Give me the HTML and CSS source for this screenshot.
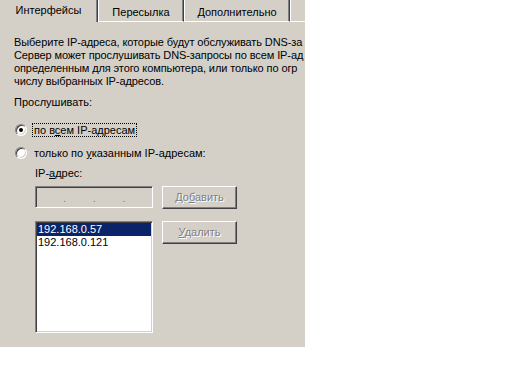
FILE: index.html
```html
<!DOCTYPE html>
<html lang="ru">
<head>
<meta charset="utf-8">
<title>Интерфейсы</title>
<link rel="stylesheet" href="styles.css">
</head>
<body>
<div class="dialog">
  <div class="tabs">
    <div class="tab active">Интерфейсы</div>
    <div class="tab t2">Пересылка</div>
    <div class="tab t3">Дополнительно</div>
    <div class="tab rest"></div>
  </div>
  <div class="panel">
    <p class="desc">Выберите IP-адреса, которые будут обслуживать DNS-за<br>Сервер может прослушивать DNS-запросы по всем IP-ад<br>определенным для этого компьютера, или только по огр<br>числу выбранных IP-адресов.</p>
    <div class="label listen">Прослушивать:</div>
    <div class="radio-row first"><span class="radio checked"></span><span class="rlabel focus">по в<u>с</u>ем IP-адресам</span></div>
    <div class="radio-row second"><span class="radio"></span><span class="rlabel">только по <u>у</u>казанным IP-адресам:</span></div>
    <div class="ip-section">
      <div class="label">IP-<u>а</u>дрес:</div>
      <div class="ctl-row add-row">
        <div class="ipbox"><span>.</span><span>.</span><span>.</span></div>
        <div class="btn">До<u>б</u>авить</div>
      </div>
      <div class="ctl-row list-row">
        <div class="listbox">
          <div class="item sel">192.168.0.57</div>
          <div class="item">192.168.0.121</div>
        </div>
        <div class="btn"><u>У</u>далить</div>
      </div>
    </div>
  </div>
</div>
</body>
</html>
```
FILE: styles.css
```css
html, body {
  margin: 0;
  padding: 0;
  background: #ffffff;
}
body {
  font-family: "Liberation Sans", Arial, sans-serif;
  font-size: 11px;
  line-height: 13px;
  color: #000;
}
.dialog {
  width: 305px;
  height: 347px;
  background: #d4d0c8;
  overflow: hidden;
}
.tabs {
  display: flex;
  height: 22px;
  width: 305px;
  overflow: hidden;
}
.tab {
  box-sizing: border-box;
  flex: none;
  height: 22px;
  border-left: 1px solid #ffffff;
  border-right: 1px solid #404040;
  border-bottom: 1px solid #ffffff;
  box-shadow: inset -1px 0 0 #808080;
  padding-top: 6px;
  text-align: center;
  white-space: nowrap;
}
.tab.active {
  width: 98px;
  border-left: none;
  border-bottom: none;
  padding-top: 4px;
}
.tab.t2 { width: 86px; }
.tab.t3 { width: 106px; }
.tab.rest {
  flex: 1;
  border-right: none;
  box-shadow: none;
}
.panel {
  box-sizing: border-box;
  width: 305px;
  padding: 14px 0 0 14px;
}
.desc {
  margin: 0;
  white-space: nowrap;
  letter-spacing: -0.1px;
}
.label.listen {
  margin-top: 8px;
}
.radio-row {
  display: flex;
  align-items: center;
  height: 16px;
  white-space: nowrap;
}
.radio-row.first { margin-top: 13px; }
.radio-row.second { margin-top: 7px; }
.radio {
  position: relative;
  box-sizing: border-box;
  width: 12px;
  height: 12px;
  margin-left: 1px;
  margin-right: 5px;
  border-radius: 50%;
  background: #ffffff;
  border: 1px solid;
  border-color: #808080 #ffffff #ffffff #808080;
  box-shadow: inset 1px 1px 0 #404040, inset -1px -1px 0 #d4d0c8;
}
.radio.checked::after {
  content: "";
  position: absolute;
  left: 3px;
  top: 3px;
  width: 4px;
  height: 4px;
  border-radius: 50%;
  background: #000;
}
.rlabel {
  border: 1px solid transparent;
  padding: 0 1px;
  line-height: 12px;
}
.rlabel.focus {
  border: 1px dotted #000;
}
.ip-section {
  margin-left: 21px;
}
.ip-section .label {
  margin-top: 6px;
}
.ctl-row {
  display: flex;
  align-items: flex-start;
  gap: 9px;
}
.add-row { margin-top: 6px; }
.list-row { margin-top: 12px; }
.ipbox {
  box-sizing: border-box;
  width: 118px;
  height: 22px;
  display: flex;
  padding: 5px 0 0 27px;
  border: 1px solid;
  border-color: #808080 #ffffff #ffffff #808080;
  box-shadow: inset 1px 1px 0 #404040, inset -1px -1px 0 #d4d0c8;
  background: #d4d0c8;
  color: #808080;
}
.ipbox span {
  width: 30px;
}
.btn {
  box-sizing: border-box;
  width: 75px;
  height: 23px;
  border: 1px solid;
  border-color: #ffffff #404040 #404040 #ffffff;
  box-shadow: inset -1px -1px 0 #808080;
  text-align: center;
  line-height: 21px;
  color: #808080;
  text-shadow: 1px 1px 0 #ffffff;
}
.listbox {
  box-sizing: border-box;
  width: 118px;
  height: 112px;
  padding: 1px;
  border: 1px solid;
  border-color: #808080 #ffffff #ffffff #808080;
  box-shadow: inset 1px 1px 0 #404040, inset -1px -1px 0 #d4d0c8;
  background: #ffffff;
}
.item {
  padding-left: 1px;
  line-height: 13px;
  white-space: nowrap;
}
.item.sel {
  background: #0a246a;
  color: #ffffff;
}
```
